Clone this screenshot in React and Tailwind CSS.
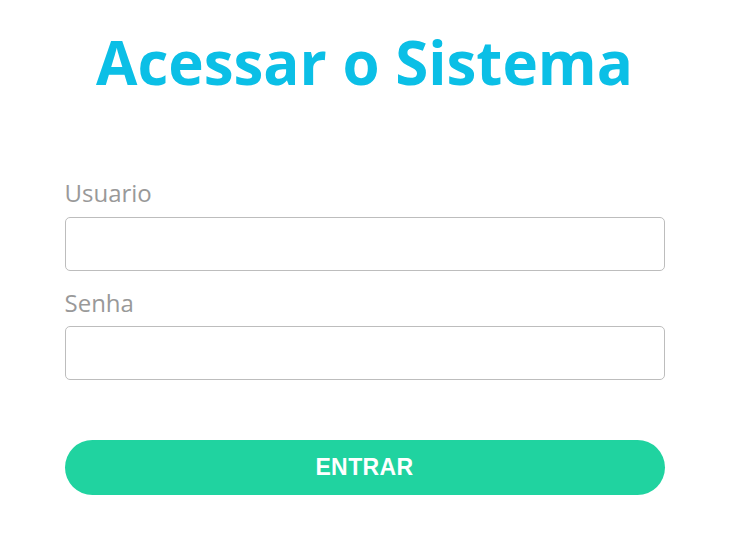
export default function App() {
  return (
    <div className="min-h-[540px] bg-white" style={{ fontFamily: '"Open Sans", sans-serif' }}>
      <div className="mx-auto w-[600px] pt-[24px]">
        <h1 className="text-center text-[60px] font-bold leading-[76px] text-[#0bbfe6]">
          Acessar o Sistema
        </h1>

        <form className="mt-[77px]" onSubmit={(e) => e.preventDefault()}>
          <label className="block text-[24px] leading-[32px] text-[#999999]">Usuario</label>
          <input
            type="text"
            className="mt-[8px] block h-[54px] w-full rounded-[5px] border border-[#bdbdbd] px-3 outline-none"
          />

          <label className="mt-[16px] block text-[24px] leading-[32px] text-[#999999]">Senha</label>
          <input
            type="password"
            className="mt-[7px] block h-[54px] w-full rounded-[5px] border border-[#bdbdbd] px-3 outline-none"
          />

          <button
            type="submit"
            className="mt-[60px] flex h-[55px] w-full items-center justify-center rounded-full bg-[#20d3a0] text-[23px] font-bold tracking-[0.4px] text-white"
            style={{ fontFamily: '"Liberation Sans", Arial, sans-serif' }}
          >
            ENTRAR
          </button>
        </form>
      </div>
    </div>
  );
}
